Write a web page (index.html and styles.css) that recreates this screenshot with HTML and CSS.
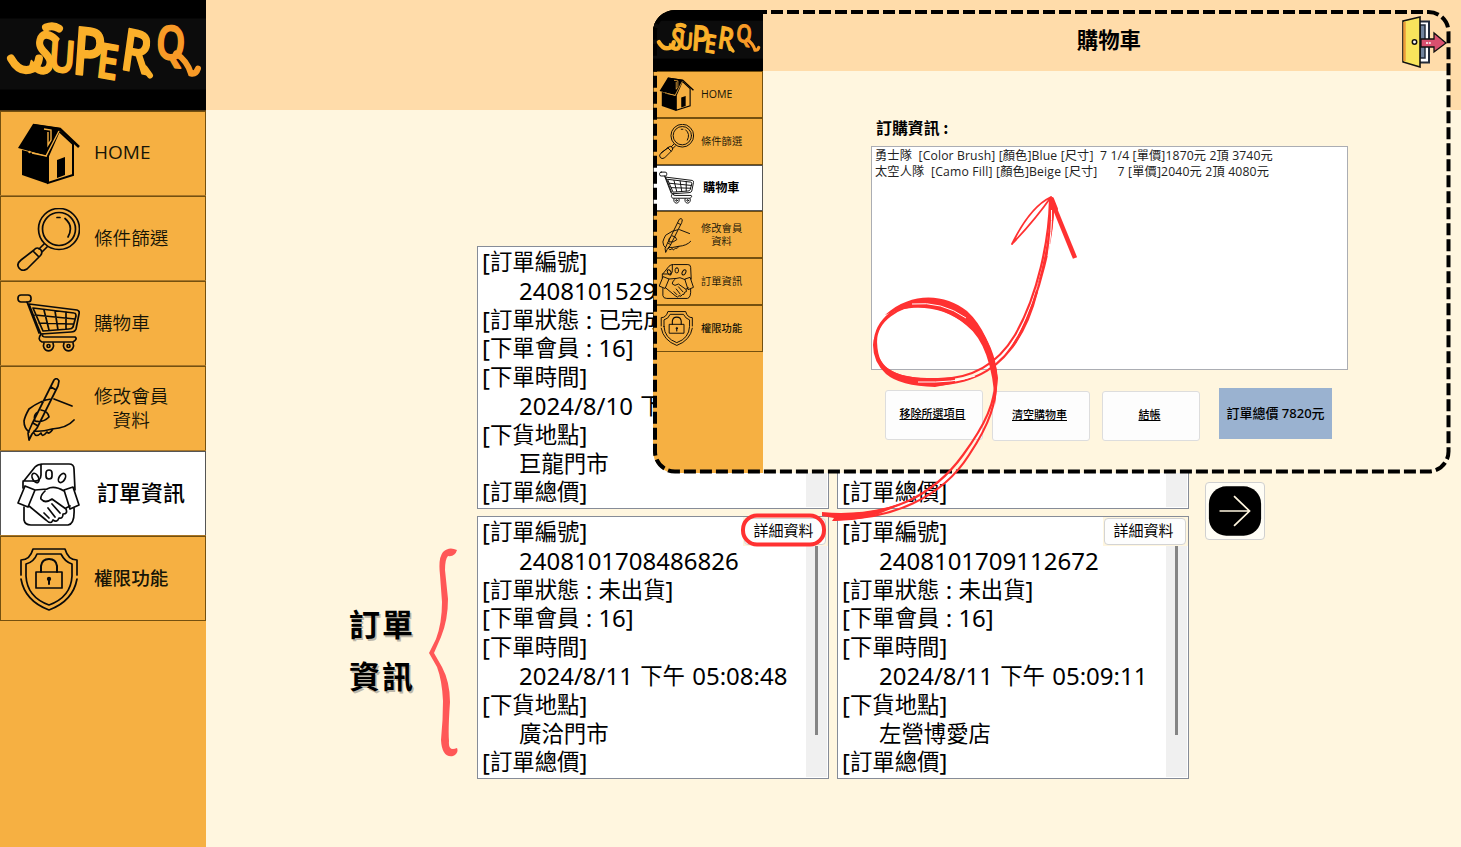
FILE: index.html
```html
<!DOCTYPE html>
<html lang="zh-Hant">
<head>
<meta charset="utf-8">
<title>SUPER Q 訂單資訊</title>
<link rel="stylesheet" href="styles.css">
</head>
<body>
<svg class="defs" width="0" height="0" aria-hidden="true">
  <symbol id="logo" viewBox="0 0 206 110">
    <rect width="206" height="110" fill="#000"/>
    <rect y="18" width="206" height="71" fill="#0c0c0c"/>
    <text class="logo-text" transform="scale(.8 1)"><tspan x="34" y="67" rotate="18" font-size="58">S</tspan><tspan x="60" y="70" rotate="5" font-size="44">U</tspan><tspan x="89" y="73" rotate="5" font-size="66">P</tspan><tspan x="119" y="76" rotate="8" font-size="48">E</tspan><tspan x="149" y="68" rotate="10" font-size="58">R</tspan><tspan class="logo-q" x="194" y="57" rotate="5" font-size="46">Q</tspan></text>
    <g fill="none" stroke="#fbb02a" stroke-linecap="round" stroke-width="8">
      <path d="M11 58Q20 74 33 68Q38 65 39 58M46 27Q53 24 59 28"/>
      <path d="M145 68 150 75" stroke-width="6"/>
      <path d="M176 53Q187 60 191 73Q196 74 198 68" stroke="#f89a27" stroke-width="6"/>
    </g>
  </symbol>
  <symbol id="home" viewBox="0 0 63 63">
    <path d="M16 1 43 5 30 33 1 25ZM5 27 31 34V61L5 52Z" fill="#000"/>
    <path d="M42 8 56 21V52L31 60V33Z" fill="none" stroke="#000" stroke-width="2"/>
    <path d="M16 2 43 6 62 24" fill="none" stroke="#000" stroke-width="2.6"/>
    <path d="M40 37 48 34V52L40 55Z" fill="#000"/>
    <path d="M27 6 34 7V17L31 22V9M15 30 29 33 42 8" fill="none" stroke="#f6b042" stroke-width="1.4"/>
    <circle cx="12.500" cy="29" r="1.200" fill="#f6b042"/>
  </symbol>
  <symbol id="search" viewBox="0 0 63 63">
    <g class="ln"><circle cx="42" cy="21" r="20.500"/><circle cx="42" cy="21" r="16.500"/>
    <path d="M48 10.500Q57 18 51 29M40 9.500H43M27 36 22 41M30 39 25 44M17 42Q20 38 24 42Q26 45 23 48L10 61Q5 64 2 60Q-1 56 4 52ZM16 43 22 49M17 42 4 52"/></g>
  </symbol>
  <symbol id="cart" viewBox="0 0 63 63">
    <g class="ln"><rect x="1" y="2" width="13" height="7" rx="3"/>
    <path d="M10 9 22 40M12 11 60 17Q63 18 62 21L59 36Q58 39 54 39L24 41Q22 37 12 11ZM16 15 57 20Q59 20 59 23L56 34Q55 36 52 36L26 38ZM27 17 32 37M38 18 41 37M49 19V36M18 22 58 26M22 30 57 31M24 41Q20 47 25 49H56Q61 46 58 44H29Q24 44 26 41"/>
    <path d="M27 50A5 5.500 0 1 0 36 50M47 50A5 5.500 0 1 0 56 50"/><circle cx="31.500" cy="53" r="1.500"/><circle cx="51.500" cy="53" r="1.500"/></g>
  </symbol>
  <symbol id="write" viewBox="0 0 63 63">
    <g class="ln"><path d="M37 2Q40-1 42 3L41 8 20 50 15 56 12 62 11 55 15 46ZM34 9 39 12M16 45 21 48M34 21Q24 22 12 31Q8 38 7 43Q7 50 12 54M37 21 55 28M24 32Q31 33 32 39Q26 45 18 43Q16 37 21 34M17 53Q24 54 35 51Q50 50 57 42M17 55Q19 60 24 55Q25 60 30 54Q32 57 36 51"/></g>
  </symbol>
  <symbol id="deal" viewBox="0 0 63 63">
    <g class="ln"><path d="M6 25V19L18 4Q21 1 26 1H52Q57 1 57 6L58 27M7 44V57Q8 62 14 62H51Q58 61 57 45M24 1 24 12Q24 19 15 18H6"/>
    <ellipse cx="18.500" cy="15" rx="3" ry="5" transform="rotate(-28 18.500 15)"/><rect x="29" y="7" width="6" height="9" rx="3"/><ellipse cx="45" cy="15" rx="3" ry="5" transform="rotate(30 45 15)"/>
    <path d="M8 23 18 27 11 44 1 40ZM47 27 56 24 62 42 53 46ZM18 27 30 26M30 26Q37 22 47 28M12 43 29 57Q34 62 36 57Q40 60 42 55Q46 56 46 51Q51 51 49 46L35 36Q28 41 24 36Q23 33 28 28M49 45 53 43M27 50 32 55M31 45 38 54M35 41 43 50"/></g>
  </symbol>
  <symbol id="shield" viewBox="0 0 63 63">
    <g class="ln"><path d="M4 27V12Q13 12 16 1H48Q51 12 60 12V27M4 31Q8 53 32 62Q56 53 60 31"/>
    <path d="M9 28V16Q17 14 20 6H44Q48 14 55 16V28Q54 49 32 57Q10 49 9 28Z"/>
    <rect x="19" y="24" width="26" height="16"/><path d="M24 24V18Q25 11 32 11Q39 11 40 18V24M32 31V36" stroke-width="2"/><circle cx="32" cy="31" r="1.300"/></g>
  </symbol>
</svg>

<div class="page">
  <aside class="sidebar">
    <svg class="logo" role="img" aria-label="SUPER Q"><use href="#logo"/></svg>
    <a class="item"><svg><use href="#home"/></svg><span class="home">HOME</span></a>
    <a class="item"><svg><use href="#search"/></svg><span>條件篩選</span></a>
    <a class="item"><svg><use href="#cart"/></svg><span>購物車</span></a>
    <a class="item"><svg><use href="#write"/></svg><span>修改會員<br>資料</span></a>
    <a class="item active"><svg><use href="#deal"/></svg><span>訂單資訊</span></a>
    <a class="item strong"><svg><use href="#shield"/></svg><span>權限功能</span></a>
  </aside>
  <div class="content">
    <header class="bar"></header>
    <main class="orders">
      <h2 class="note">訂單<br>資訊</h2>
      <svg class="brace" viewBox="429 548 30 210"><path d="M457 550Q449 546 443 552Q438 558 440 575L442 602Q442 623 436 639L429 653L437 667Q442 680 443 701Q443 720 441 740Q442 758 453 756Q459 753 457 748Q448 752 449 741Q448 730 450 702Q450 682 442 667L434 653L441 637Q448 620 448 599L445 570Q445 559 448 556Q455 557 457 550Z" fill="#ff5757"/></svg>
      <div class="grid">
        <article class="card">
          <p>[<b>訂單編號</b>]</p><p class="in">2408101529</p>
          <p>[<b>訂單狀態</b> : <b>已完成</b></p><p>[<b>下單會員</b> : 16]</p>
          <p>[<b>下單時間</b>]</p><p class="in">2024/8/10 <b>下</b></p>
          <p>[<b>下貨地點</b>]</p><p class="in"><b>巨龍門市</b></p><p>[<b>訂單總價</b>]</p>
          <i class="track"></i>
        </article>
        <article class="card last-line">
          <p>[<b>訂單總價</b>]</p>
          <i class="track"></i>
        </article>
        <article class="card">
          <p>[<b>訂單編號</b>]</p><p class="in">2408101708486826</p>
          <p>[<b>訂單狀態</b> : <b>未出貨</b>]</p><p>[<b>下單會員</b> : 16]</p>
          <p>[<b>下單時間</b>]</p><p class="in">2024/8/11 <b>下午</b> 05:08:48</p>
          <p>[<b>下貨地點</b>]</p><p class="in"><b>廣洽門市</b></p><p>[<b>訂單總價</b>]</p>
          <i class="track thumb"></i>
          <div class="detail"><button>詳細資料</button></div>
        </article>
        <article class="card">
          <p>[<b>訂單編號</b>]</p><p class="in">2408101709112672</p>
          <p>[<b>訂單狀態</b> : <b>未出貨</b>]</p><p>[<b>下單會員</b> : 16]</p>
          <p>[<b>下單時間</b>]</p><p class="in">2024/8/11 <b>下午</b> 05:09:11</p>
          <p>[<b>下貨地點</b>]</p><p class="in"><b>左營博愛店</b></p><p>[<b>訂單總價</b>]</p>
          <i class="track thumb"></i>
          <div class="detail"><button>詳細資料</button></div>
        </article>
      </div>
      <button class="next" aria-label="next"><svg viewBox="0 0 60 57"><rect x="3" y="3" width="54" height="51" rx="18" fill="#000"/><path d="M14 28.500H45M29 13 45 28.500 29 44" fill="none" stroke="#fff6df" stroke-width="1.800"/></svg></button>
    </main>
  </div>
</div>

<section class="popup">
  <aside class="sidebar mini">
    <svg class="logo" role="img" aria-label="SUPER Q"><use href="#logo"/></svg>
    <a class="item"><svg><use href="#home"/></svg><span class="home">HOME</span></a>
    <a class="item"><svg><use href="#search"/></svg><span>條件篩選</span></a>
    <a class="item active"><svg><use href="#cart"/></svg><span>購物車</span></a>
    <a class="item"><svg><use href="#write"/></svg><span>修改會員<br>資料</span></a>
    <a class="item"><svg><use href="#deal"/></svg><span>訂單資訊</span></a>
    <a class="item strong"><svg><use href="#shield"/></svg><span>權限功能</span></a>
  </aside>
  <div class="content">
    <header class="bar title"><h1>購物車</h1>
      <svg class="exit" viewBox="0 0 46 52"><path d="M18 5.500H27V46.500H18" fill="#fff" stroke="#222b3a" stroke-width="2"/><path d="M18 9H23V42H18Z" fill="#71839c" stroke="#222b3a" stroke-width="1.500"/><path d="M1 5 18 1V51L1 46Z" fill="#f8e45c" stroke="#111" stroke-width="1.600"/><path d="M2.500 6V45" stroke="#ec9b3b" stroke-width="2.500"/><circle cx="12.500" cy="26" r="2.200" fill="#fff" stroke="#111" stroke-width="1.500"/><path d="M19 23H32V17L44 27 32 36V31H19Z" fill="#d9506f" stroke="#111" stroke-width="1.300"/><path d="M24 27H29" stroke="#fff" stroke-width="1.500" stroke-dasharray="2 .8"/></svg>
    </header>
    <div class="cart">
      <h3>訂購資訊 :</h3>
      <div class="list"><p>勇士隊&nbsp; [Color Brush] [顏色]Blue [尺寸]&nbsp; 7 1/4 [單價]1870元 2頂 3740元</p><p>太空人隊&nbsp; [Camo Fill] [顏色]Beige [尺寸]&nbsp;&nbsp;&nbsp;&nbsp;&nbsp; 7 [單價]2040元 2頂 4080元</p></div>
      <div class="actions"><button>移除所選項目</button><button>清空購物車</button><button>結帳</button><div class="total">訂單總價 7820元</div></div>
    </div>
  </div>
</section>

<svg class="marks" viewBox="0 0 1461 847" aria-hidden="true">
  <rect x="655" y="12" width="793.500" height="459.500" rx="20" fill="none" stroke="#000" stroke-width="4" stroke-dasharray="12 4"/>
  <g fill="none" stroke="#ff3131" stroke-linecap="round" stroke-linejoin="round">
    <rect x="743" y="515.500" width="81" height="29" rx="14" stroke-width="4"/>
    <path d="M830 514C890 518 934 495 963 455C985 425 996 402 996 375C994 340 965 300 930 300C900 300 873 320 875 346C876 368 895 381 935 379C975 380 1000 360 1015 335C1038 295 1049 240 1050 200" stroke-width="2.200"/>
    <path d="M836 519C890 520 942 498 969 455C989 425 998 402 996 372C990 335 955 307 920 306C900 305 875 320 876 343C877 372 895 384 935 385C978 383 1003 365 1019 336C1040 295 1054 235 1053 202" stroke-width="2.200"/>
    <path d="M1051 197Q1030 207 1012 244M1051 197Q1035 220 1012 244" stroke-width="1.800"/>
    <path d="M1052 199 1056 209" stroke-width="4"/><path d="M1053 204 1075 258" stroke-width="4.500" stroke-linecap="butt"/>
  </g>
  <g fill="#ff3131">
    <path d="M822 512Q865 516 905 502Q870 522 832 521L834 518 822 516Z"/>
    <path d="M885 315C912 291 945 294 967 311Q990 332 998 378L995 405Q992 345 966 325C942 304 908 304 885 315Z"/>
    <path d="M879 330Q871 348 882 362C890 374 908 378 935 379L955 377V383L935 387Q900 386 886 374Q873 362 873 345Q873 335 885 318Z"/>
    <path d="M1049 200 1054 199Q1055 240 1036 290Q1052 235 1049 200Z"/>
    <path d="M1007 352Q1027 325 1036 290L1038 292Q1030 325 1013 348Z"/>
  </g>
  <g fill="none" stroke="#fff" stroke-width="1"><path d="M912 304Q942 301 966 318"/><path d="M918 382Q955 383 975 376"/><path d="M1051.500 210Q1052 230 1048 256"/></g>
</svg>
</body>
</html>
```

FILE: styles.css
```css
* { box-sizing: border-box; }
body { margin: 0; width: 1461px; height: 847px; overflow: hidden; position: relative; font-family: "Noto Sans", "Noto Sans CJK TC", sans-serif; color: #000; background: #fff6df; }
p, h1, h2, h3 { margin: 0; }
button { font-family: inherit; color: #000; padding: 0; }
.defs { position: absolute; }
.ln { fill: none; stroke: #0a0a0a; stroke-width: 1.7; stroke-linecap: round; stroke-linejoin: round; }
.logo-text { font-family: "Open Sans", sans-serif; font-weight: 600; fill: #fbb02a; stroke: #fbb02a; stroke-width: 2; stroke-linejoin: round; }
.logo-q { fill: #f89a27; stroke: #f89a27; }

.page { display: flex; height: 847px; }
.sidebar { width: 206px; flex: none; background: #f6b042; }
.sidebar .logo { display: block; width: 206px; height: 111px; background: #000; }
.item { display: flex; align-items: center; height: 85px; padding-left: 16px; border: 1px solid #74500f; box-shadow: 0 -1px 0 #a87628; color: #171507; }
.item svg { width: 63px; height: 63px; flex: none; margin: 1px 14px 0 0; }
.item span { font-family: "Noto Sans CJK TC", sans-serif; font-size: 18.6px; line-height: 24px; text-align: center; font-weight: 350; padding-bottom: 4px; }
.item .home { font-family: "Open Sans", sans-serif; font-size: 19px; font-weight: 400; padding-bottom: 3px; }
.item.active { background: #fff; border-color: #555; color: #000; }
.item.active span { font-size: 22px; font-weight: 500; margin-left: 3px; padding-bottom: 6px; }
.item.strong span { font-weight: 500; }

.content { flex: 1; min-width: 0; }
.bar { height: 110px; background: #ffdcaa; }
.orders { display: flex; align-items: flex-start; padding: 136px 0 0 143px; }
.note { width: 68px; margin: 351px 0 0; font-family: "Noto Sans CJK TC", sans-serif; font-size: 31px; line-height: 52px; letter-spacing: 2px; font-weight: 700; text-shadow: 1.5px 1.5px 0 #bdb7a9; }
.brace { width: 30px; height: 210px; margin: 302px 18px 0 12px; flex: none; }
.grid { display: grid; grid-template-columns: 352px 352px; grid-auto-rows: 263px; gap: 7px 8px; }
.card { position: relative; background: #fff; border: 1px solid #868c98; padding: 1px 0 0 4px; overflow: hidden; font-size: 24px; }
.card p { height: 28.8px; line-height: 28.8px; white-space: pre; }
.card b { font: 400 22.4px/20px "Noto Sans CJK TC", sans-serif; vertical-align: 1px; }
.card .in { padding-left: 37px; word-spacing: 1px; }
.card.last-line { padding-top: 231.4px; }
.track { position: absolute; right: 1px; top: 1px; bottom: 1px; width: 21px; background: #f0f0f0; }
.thumb::after { content: ""; position: absolute; left: 9px; top: 28px; width: 3px; height: 189px; background: #858585; }
.detail { position: absolute; right: 0; top: -1px; width: 85px; height: 30px; padding: 2px 2px 1px 1px; background: #fff6df; }
.detail button { display: block; width: 82px; height: 27px; border: 1px solid #d4d4d4; border-radius: 4px; background: #fdfdfd; font: 400 15px/20px "Noto Sans CJK TC", sans-serif; padding: 0 3px 3px 0; }
.next { width: 60px; height: 58px; margin: 236px 0 0 16px; border: 1px solid #d0d0d0; border-radius: 4px; background: #fffdf5; flex: none; }
.next svg { display: block; width: 58px; height: 56px; }

.popup { position: absolute; left: 653px; top: 10px; width: 797px; height: 463px; border-radius: 22px; overflow: hidden; display: flex; background: #fff6df; }
.mini { width: 110px; }
.mini .logo { width: 110px; height: 61px; }
.mini .item { height: 46.75px; padding-left: 5px; box-shadow: none; }
.mini .item svg { width: 35px; height: 35px; margin: 1px 7px 0 0; }
.mini .item span { font-size: 10.3px; line-height: 13px; padding-bottom: 2px; }
.mini .item .home { font-size: 10.6px; padding-bottom: 0; }
.mini .item.active span { font-size: 12.2px; font-weight: 700; margin-left: 2px; padding-bottom: 0; }
.bar.title { height: 61px; display: flex; align-items: center; justify-content: flex-end; }
.title h1 { font: 700 21.400px/30px "Noto Sans CJK TC", sans-serif; padding-bottom: 4px; }
.exit { width: 46px; height: 52px; margin: 2px 2px 0 261px; }
.cart { padding: 46px 0 0 108px; }
.cart h3 { padding-left: 5px; height: 29px; font: 700 15.900px/22px "Noto Sans CJK TC", sans-serif; }
.list { width: 477px; height: 224px; border: 1px solid #abadb3; background: #fff; padding: 1px 3px; color: #222; }
.list p { font: 400 12.200px/16px "Open Sans", "Noto Sans CJK TC", sans-serif; letter-spacing: .13px; white-space: nowrap; }
.list p + p { letter-spacing: .17px; }
.actions { display: flex; align-items: flex-start; padding: 18px 0 0 14px; }
.actions button { width: 98px; height: 50px; margin: 3px 12px 0 0; border: 1px solid #ddd; border-radius: 3px; background: #fdfdfd; font: 500 11px/16px "Noto Sans CJK TC", sans-serif; text-decoration: underline; padding: 0 3px 5px 0; }
.actions button:first-child { margin: 2px 9px 0 0; }
.total { margin-left: 7px; width: 113px; height: 51px; background: #9ab2d0; font: 500 13px/51px "Noto Sans", "Noto Sans CJK TC", sans-serif; text-align: center; white-space: nowrap; }
.marks { position: absolute; left: 0; top: 0; width: 1461px; height: 847px; pointer-events: none; }
```
